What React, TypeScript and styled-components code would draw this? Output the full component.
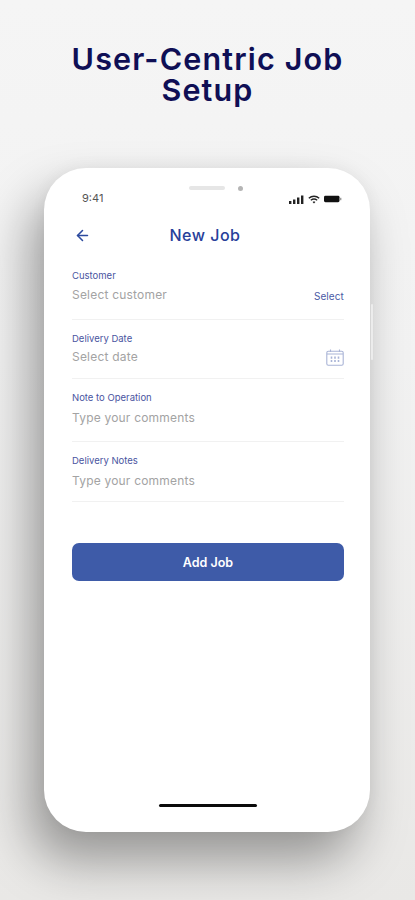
import styled, { createGlobalStyle } from 'styled-components';
import { LuArrowLeft } from 'react-icons/lu';

const GlobalStyle = createGlobalStyle`
  html, body {
    margin: 0;
    padding: 0;
    background: #f2f2f2;
  }
`;

const Page = styled.div`
  width: 415px;
  height: 900px;
  overflow: hidden;
  box-sizing: border-box;
  padding-top: 43px;
  background: linear-gradient(180deg, #f5f5f5 0%, #f2f2f2 40%, #e9e8e6 100%);
  font-family: Inter, 'Liberation Sans', sans-serif;
  display: flex;
  flex-direction: column;
  align-items: center;
`;

const Title = styled.h1`
  margin: 0;
  width: 320px;
  font-size: 30.5px;
  line-height: 31px;
  font-weight: 600;
  letter-spacing: 1.15px;
  text-align: center;
  color: #0f0f55;
`;

const Phone = styled.div`
  position: relative;
  margin-top: 63px;
  margin-right: 1px;
  width: 326px;
  height: 664px;
  flex-shrink: 0;
  box-sizing: border-box;
  padding: 20px 26px 0 28px;
  border-radius: 42px;
  background: #fff;
  box-shadow:
    -14px 28px 50px rgba(0, 0, 0, 0.36),
    0 -2px 16px rgba(0, 0, 0, 0.04);
  display: flex;
  flex-direction: column;
`;

const SideButton = styled.span`
  position: absolute;
  right: -3px;
  top: 136px;
  width: 2px;
  height: 56px;
  border-radius: 1px;
  background: #ececec;
`;

const StatusBar = styled.div`
  display: grid;
  grid-template-columns: 1fr auto 1fr;
  align-items: start;
  height: 20px;
  padding: 0 2px 0 10px;
`;

const Time = styled.span`
  font-size: 11px;
  line-height: 20px;
  color: #555;
`;

const Notch = styled.div`
  display: flex;
  align-items: center;
  gap: 13px;
  height: 4px;
  transform: translate(4px, -2px);
`;

const Speaker = styled.span`
  width: 36px;
  height: 4px;
  border-radius: 2px;
  background: #e6e6e6;
`;

const Camera = styled.span`
  width: 5px;
  height: 5px;
  border-radius: 50%;
  background: #b5b5b5;
`;

const StatusIcons = styled.div`
  justify-self: end;
  display: flex;
  align-items: center;
  gap: 4px;
  height: 20px;
  padding-top: 2px;
  box-sizing: border-box;
`;

const Header = styled.header`
  display: grid;
  grid-template-columns: 1fr auto 1fr;
  align-items: center;
  height: 24px;
  margin-top: 15px;
  margin-bottom: 10px;
`;

const BackButton = styled.span`
  display: flex;
  color: #2c4a9e;
  margin-left: 2px;
`;

const HeaderTitle = styled.h2`
  margin: 0 6px 0 0;
  font-size: 16px;
  line-height: 24px;
  font-weight: 500;
  letter-spacing: 0.5px;
  color: #27409a;
`;

const Form = styled.div`
  display: flex;
  flex-direction: column;
`;

const Field = styled.div<{ $height: number }>`
  height: ${p => p.$height}px;
  box-sizing: border-box;
  border-bottom: 1px solid #f1f1f1;
  display: flex;
  flex-direction: column;
  padding-top: 13px;
`;

const Label = styled.label`
  font-size: 9.5px;
  line-height: 12px;
  color: #4a559f;
`;

const ValueRow = styled.div<{ $gap: number }>`
  display: flex;
  align-items: center;
  justify-content: space-between;
  margin-top: ${p => p.$gap}px;
  height: 16px;
`;

const Placeholder = styled.span`
  font-size: 12px;
  line-height: 16px;
  letter-spacing: 0.2px;
  color: #a3a3a3;
`;

const SelectLink = styled.span`
  font-size: 10px;
  letter-spacing: 0.1px;
  color: #4a5aa5;
  margin-top: 2px;
`;

const AddButton = styled.button`
  margin-top: 41px;
  height: 38px;
  width: 100%;
  border: 0;
  border-radius: 7px;
  background: #3e5ba8;
  color: #fff;
  font-family: inherit;
  font-size: 12.5px;
  font-weight: 600;
`;

const HomeIndicator = styled.div`
  position: absolute;
  left: 115px;
  bottom: 25px;
  width: 98px;
  height: 3px;
  border-radius: 2px;
  background: #0a0a0a;
`;

function SignalIcon() {
  return (
    <svg width="15" height="9" viewBox="0 0 15 9" fill="#222">
      <rect x="0" y="6" width="2.4" height="3" />
      <rect x="4" y="4.5" width="2.4" height="4.5" />
      <rect x="8" y="2.5" width="2.4" height="6.5" />
      <rect x="12" y="0.5" width="2.4" height="8.5" />
    </svg>
  );
}

function WifiIcon() {
  return (
    <svg width="12" height="9" viewBox="0 0 12 9" fill="none" stroke="#222" strokeWidth="1.4">
      <path d="M0.8 3.2C3.8 0.6 8.2 0.6 11.2 3.2" />
      <path d="M2.8 5.2C4.6 3.8 7.4 3.8 9.2 5.2" />
      <path d="M6 8.6L4.6 7C5.4 6.4 6.6 6.4 7.4 7Z" fill="#222" stroke="none" />
    </svg>
  );
}

function BatteryIcon() {
  return (
    <svg width="18" height="8" viewBox="0 0 18 8" fill="#111">
      <rect x="0" y="0.8" width="15.5" height="6.4" rx="1.4" />
      <rect x="16" y="2.8" width="1.4" height="2.4" fill="#999" />
    </svg>
  );
}

function CalendarIcon() {
  return (
    <svg width="18" height="17" viewBox="0 0 18 17" fill="none" stroke="#a9b4d6" strokeWidth="1.1">
      <rect x="0.8" y="2.2" width="16.4" height="14" rx="1.5" />
      <path d="M4.5 0.5V3M13.5 0.5V3" />
      <path d="M1 5H17" strokeWidth="1" />
      <path d="M5.5 7.5V13.5M9 7.5V13.5M12.5 7.5V13.5" strokeWidth="1.6" strokeDasharray="2.2 1.2" />
    </svg>
  );
}

export default function App() {
  return (
    <Page>
      <GlobalStyle />
      <Title>User-Centric Job Setup</Title>
      <Phone>
        <SideButton />
        <StatusBar>
          <Time>9:41</Time>
          <Notch>
            <Speaker />
            <Camera />
          </Notch>
          <StatusIcons>
            <SignalIcon />
            <WifiIcon />
            <BatteryIcon />
          </StatusIcons>
        </StatusBar>
        <Header>
          <BackButton>
            <LuArrowLeft size={17} strokeWidth={2.2} />
          </BackButton>
          <HeaderTitle>New Job</HeaderTitle>
        </Header>
        <Form>
          <Field $height={63}>
            <Label>Customer</Label>
            <ValueRow $gap={5}>
              <Placeholder>Select customer</Placeholder>
              <SelectLink>Select</SelectLink>
            </ValueRow>
          </Field>
          <Field $height={59}>
            <Label>Delivery Date</Label>
            <ValueRow $gap={4}>
              <Placeholder>Select date</Placeholder>
              <CalendarIcon />
            </ValueRow>
          </Field>
          <Field $height={63}>
            <Label>Note to Operation</Label>
            <ValueRow $gap={6}>
              <Placeholder>Type your comments</Placeholder>
            </ValueRow>
          </Field>
          <Field $height={60}>
            <Label>Delivery Notes</Label>
            <ValueRow $gap={6}>
              <Placeholder>Type your comments</Placeholder>
            </ValueRow>
          </Field>
        </Form>
        <AddButton>Add Job</AddButton>
        <HomeIndicator />
      </Phone>
    </Page>
  );
}
